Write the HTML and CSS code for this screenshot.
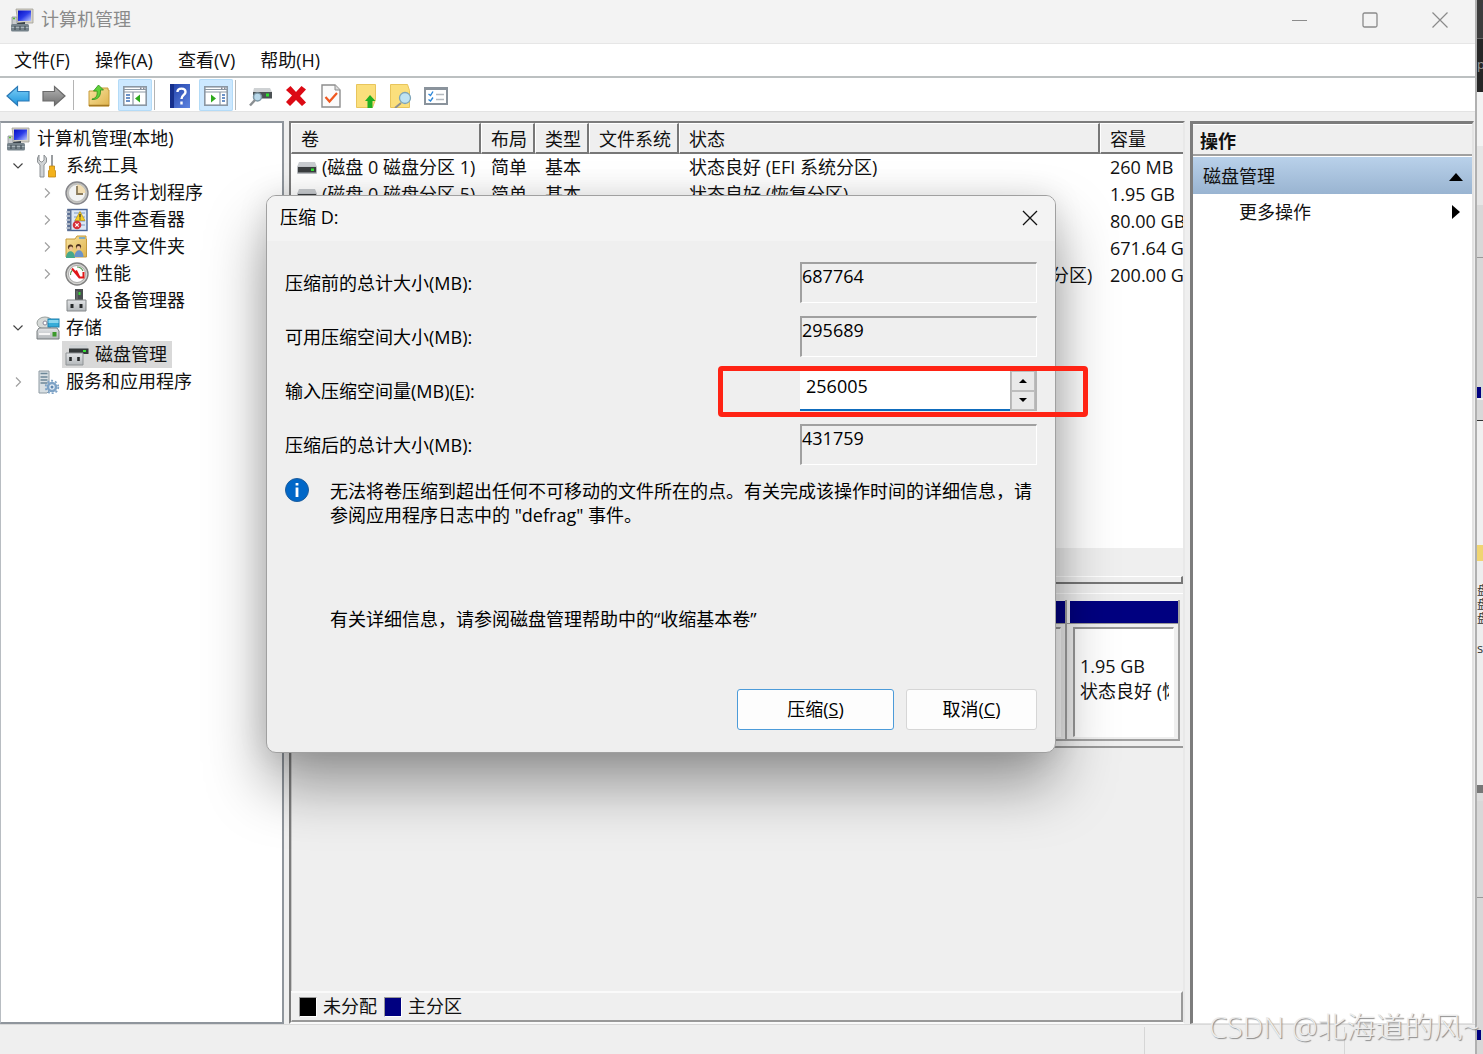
FILE: index.html
```html
<!DOCTYPE html>
<html lang="zh-CN">
<head>
<meta charset="utf-8">
<title>计算机管理</title>
<link rel="stylesheet" href="styles.css">
</head>
<body>
<svg class="sprite" aria-hidden="true">
  <defs>
    <linearGradient id="g-screen" x1="0" y1="0" x2="1" y2="1"><stop offset="0" stop-color="#0610c0"/><stop offset=".5" stop-color="#2b3ce8"/><stop offset="1" stop-color="#b9c6ff"/></linearGradient>
    <linearGradient id="g-blue" x1="0" y1="0" x2="0" y2="1"><stop offset="0" stop-color="#7fd0f7"/><stop offset="1" stop-color="#1b93dc"/></linearGradient>
    <linearGradient id="g-gray" x1="0" y1="0" x2="0" y2="1"><stop offset="0" stop-color="#b5b5b5"/><stop offset="1" stop-color="#6f6f6f"/></linearGradient>
    <linearGradient id="g-folder" x1="0" y1="0" x2="1" y2="1"><stop offset="0" stop-color="#f8e3a0"/><stop offset="1" stop-color="#dfb44e"/></linearGradient>
    <linearGradient id="g-help" x1="0" y1="0" x2="1" y2="1"><stop offset="0" stop-color="#1f3fa8"/><stop offset="1" stop-color="#5d84e0"/></linearGradient>
    <linearGradient id="g-metal" x1="0" y1="0" x2="0" y2="1"><stop offset="0" stop-color="#e2e4e6"/><stop offset="1" stop-color="#b4b8bb"/></linearGradient>
  </defs>
  <symbol id="i-computer" viewBox="0 0 24 24">
    <path d="M2 9h5v9H2z" fill="#c9cccf" stroke="#8b9094" stroke-width=".8"/><path d="M3 10.500h2" stroke="#59c02f" stroke-width="1.500"/>
    <path d="M6 1h17v14H8z" fill="#d6d3c8" stroke="#a19e94" stroke-width=".8"/>
    <path d="M8 2.500h13v10.500H8z" fill="url(#g-screen)"/>
    <path d="M7 15l8-1v2l-7 2z" fill="#38424a"/>
    <rect x="1" y="16" width="18" height="7.500" rx="1.500" fill="#75828a"/><path d="M1.500 19.500h17" stroke="#a9b4ba"/><path d="M5 18v4M10 18v4M15 18v4" stroke="#4a565e" stroke-width="1.300"/>
  </symbol>
  <symbol id="i-drive" viewBox="0 0 22 12">
    <path d="M3 0h16l2 5H1z" fill="#c9ccd0"/><rect x="1" y="4.500" width="20" height="7.500" rx="1" fill="#b9bcc0"/><rect x="2" y="5" width="18" height="5.500" fill="#3b3e40"/><rect x="15" y="6.500" width="3" height="2.500" fill="#35e035"/>
  </symbol>
  <symbol id="i-panes" viewBox="0 0 24 20">
    <rect x=".8" y=".8" width="22.400" height="18.400" fill="#fff" stroke="#8b97a3" stroke-width="1.600"/><path d="M1 3.500h22M1 6h22" stroke="#8b97a3" stroke-width="1.200"/><path d="M17 2.200h1.500M20 2.200h1.500" stroke="#556"/>
  </symbol>
</svg>

<div class="desktop">
  <main class="app">
    <header class="titlebar">
      <svg class="ico24"><use href="#i-computer"/></svg>
      <h1 class="titlebar-text">计算机管理</h1>
      <div class="caption">
        <button class="cap-btn" aria-label="最小化"><svg width="16" height="16"><path d="M0 8.500h15" stroke="#8c8c8c"/></svg></button>
        <button class="cap-btn" aria-label="最大化"><svg width="16" height="16"><rect x="1" y="1" width="14" height="14" rx="1.500" fill="none" stroke="#8a8a8a" stroke-width="1.300"/></svg></button>
        <button class="cap-btn" aria-label="关闭"><svg width="16" height="16"><path d="M.5.500l15 15M15.500.500l-15 15" stroke="#8a8a8a" stroke-width="1.200"/></svg></button>
      </div>
    </header>
    <nav class="menubar">
      <button>文件(F)</button><button>操作(A)</button><button>查看(V)</button><button>帮助(H)</button>
    </nav>
    <div class="toolbar">
      <button class="tool" aria-label="后退"><svg width="24" height="22"><path d="M1 11L11.500 1.500V6.500H23V16H11.500V20.500Z" fill="url(#g-blue)" stroke="#2a78b5" stroke-width="1.200"/></svg></button>
      <button class="tool" aria-label="前进"><svg width="24" height="22"><path d="M23 11L12.500 1.500V6.500H1V16H12.500V20.500Z" fill="url(#g-gray)" stroke="#6a6a6a" stroke-width="1.200"/></svg></button>
      <span class="sep"></span>
      <button class="tool" aria-label="上一级"><svg width="24" height="24"><path d="M2 7h7l2-3h10v2h1v16H2z" fill="url(#g-folder)" stroke="#c89c3c"/><path d="M2 21.500h20" stroke="#a57920" stroke-width="1.500"/><path d="M5 15C10 14 10.500 11 10 7H6.500L11.500 1l5 5H13.500C14 12 11 16 5 15.500Z" fill="#5fd13a" stroke="#2f8f1a" stroke-width=".8"/></svg></button>
      <button class="tool active" aria-label="显示控制台树"><svg width="24" height="20"><use href="#i-panes"/><path d="M10 6v13" stroke="#8b97a3" stroke-width="1.200"/><path d="M3 9h4M3 12h4M3 15h4" stroke="#3d6fb5" stroke-width="1.500"/><path d="M17 8.500v8l-5-4z" fill="#2faa1c"/></svg></button>
      <span class="sep"></span>
      <button class="tool" aria-label="帮助"><svg width="20" height="24"><rect width="20" height="24" fill="url(#g-help)"/><rect width="4" height="24" fill="#16308c"/><path d="M7.500 8C7.500 3.500 15.500 3.500 15.500 8C15.500 11 11.500 11 11.500 15M11.500 17.500v3" stroke="#fff" stroke-width="2.400" fill="none"/></svg></button>
      <button class="tool active" aria-label="显示操作窗格"><svg width="24" height="20"><use href="#i-panes"/><path d="M16 6v13" stroke="#8b97a3" stroke-width="1.200"/><path d="M18 9h3M18 12h3M18 15h3" stroke="#3d6fb5" stroke-width="1.500"/><path d="M7 8.500v8l5-4z" fill="#2faa1c"/></svg></button>
      <span class="sep"></span>
      <button class="tool slim" aria-label="重新扫描"><svg width="24" height="22"><path d="M5 3h16l2 4H4z" fill="#cfd2d4"/><rect x="4" y="7" width="19" height="6.500" fill="#4b5154"/><rect x="17" y="8.500" width="3" height="3" fill="#2ee02e"/><circle cx="8.500" cy="12" r="4" fill="#b8d8ea" stroke="#7d97a5" stroke-width="1.500"/><path d="M6 15l-5 5.500" stroke="#8a8f92" stroke-width="2.500"/></svg></button>
      <button class="tool slim" aria-label="删除"><svg width="22" height="22"><path d="M1 5L5.500 1 11 7 16.500 1 21 4.500 15 11l6 6.500L17 21l-6-6-6 6-4-4 6-6.500Z" fill="#dc0a14"/></svg></button>
      <button class="tool slim" aria-label="属性"><svg width="20" height="24"><path d="M1 1h13l5 5v17H1z" fill="#fbfbfb" stroke="#8d8d8d" stroke-width="1.400"/><path d="M14 1v5h5" fill="#ddd" stroke="#8d8d8d"/><path d="M4.500 13l4 4.500L16 9" fill="none" stroke="#f0571f" stroke-width="2.200"/></svg></button>
      <button class="tool slim" aria-label="打开"><svg width="20" height="24"><path d="M.5.500h19v15l-3 8H.5z" fill="#fbdf7c" stroke="#e8c55c"/><path d="M14 11l5.500 6H16.500v7h-5v-7H9z" fill="#22b022"/></svg></button>
      <button class="tool slim" aria-label="浏览"><svg width="22" height="24"><path d="M.5.500h17l2 6v17H.5z" fill="#fbdf7c" stroke="#e8c55c"/><path d="M11 19l-6 5" stroke="#8c8f92" stroke-width="2"/><circle cx="15" cy="14" r="5.500" fill="#bfe3f3" stroke="#7fa5b8" stroke-width="1.300"/></svg></button>
      <button class="tool slim" aria-label="列表"><svg width="24" height="18"><rect x="1" y="1" width="22" height="16" fill="#fff" stroke="#8a939c" stroke-width="2"/><path d="M1 2h22" stroke="#8a939c" stroke-width="2"/><path d="M4.500 7l2 1.500L9 4.500M4.500 12.500l2 1.500L9 10.500" fill="none" stroke="#2b86d8" stroke-width="1.400"/><path d="M12 7.500h8M12 12.500h8" stroke="#b5bac0" stroke-width="1.400"/></svg></button>
    </div>

    <div class="panes">
      <aside class="tree">
        <ul>
          <li class="node l0"><svg class="ico24"><use href="#i-computer"/></svg><span>计算机管理(本地)</span></li>
          <li class="node l1"><svg class="chev" viewBox="0 0 10 10"><path d="M.5 2.500L5 7l4.500-4.500" stroke="#444"/></svg>
            <svg class="ico24" viewBox="0 0 24 24"><path d="M3 1v5l2 2h1l2-2V1l2.500 3v4L8 11v12H4V11L1.500 8V4z" fill="#d0d3d5" stroke="#85898c" stroke-width=".9"/><path d="M16 1v11" stroke="#9a9da0" stroke-width="2"/><path d="M13.500 12h5v3.500l1 1.500v6h-7v-6l1-1.500z" fill="#f3b21c" stroke="#bf8510" stroke-width=".8"/></svg><span>系统工具</span></li>
          <li class="node l2"><svg class="chev side" viewBox="0 0 10 10"><path d="M3 .5L7.500 5 3 9.500" stroke="#a0a0a0"/></svg>
            <svg class="ico24" viewBox="0 0 24 24"><circle cx="12" cy="12" r="11" fill="#c4c4c0" stroke="#85858a" stroke-width="1.400"/><circle cx="12" cy="12" r="8.500" fill="#f2f3f3" stroke="#aaa" stroke-width=".6"/><path d="M12 12V3.500A8.500 8.500 0 0 1 20.500 12z" fill="#f1ddb2"/><path d="M12 5v8h6" fill="none" stroke="#8a7a5a" stroke-width="1.800"/></svg><span>任务计划程序</span></li>
          <li class="node l2"><svg class="chev side" viewBox="0 0 10 10"><path d="M3 .5L7.500 5 3 9.500" stroke="#a0a0a0"/></svg>
            <svg class="ico24" viewBox="0 0 24 24"><rect x="3" y="1.500" width="19" height="21" fill="#dce7f4" stroke="#4b6797" stroke-width="1.400"/><rect x="2.500" y="1" width="4" height="22" fill="#5b6f92"/><path d="M1 4h4M1 8h4M1 12h4M1 16h4M1 20h4" stroke="#c5ccd6" stroke-width="1.400"/><path d="M9 5h11M9 9h11M9 13h11M9 17h11" stroke="#7f9cc6"/><path d="M15 3.500l5 9H10z" fill="#f7cf24" stroke="#bb9410" stroke-width=".7"/><path d="M15 6v3.500M15 10.500v1" stroke="#333" stroke-width="1.300"/><circle cx="12" cy="17" r="4.300" fill="#d63038"/><path d="M10.300 15.300l3.400 3.400M13.700 15.300l-3.400 3.400" stroke="#fff" stroke-width="1.200"/></svg><span>事件查看器</span></li>
          <li class="node l2"><svg class="chev side" viewBox="0 0 10 10"><path d="M3 .5L7.500 5 3 9.500" stroke="#a0a0a0"/></svg>
            <svg class="ico24" viewBox="0 0 24 24"><path d="M1 4h9l2-3h9v3h.5v18H1z" fill="url(#g-folder)" stroke="#c79b3b"/><path d="M14 3h6" stroke="#5aa0dc" stroke-width="1.500"/><circle cx="5.500" cy="12" r="2.600" fill="#5a3a20"/><circle cx="6" cy="13.500" r="2" fill="#f0c59a"/><path d="M1 23c0-9 9-9 9 0z" fill="#45a88a"/><circle cx="13.500" cy="11.500" r="2.600" fill="#4c3220"/><circle cx="13.500" cy="13" r="2" fill="#f0c59a"/><path d="M9.500 22c0-9 9-9 9 0z" fill="#6a93ca"/></svg><span>共享文件夹</span></li>
          <li class="node l2"><svg class="chev side" viewBox="0 0 10 10"><path d="M3 .5L7.500 5 3 9.500" stroke="#a0a0a0"/></svg>
            <svg class="ico24" viewBox="0 0 24 24"><circle cx="12" cy="12" r="11" fill="#d3d3d0" stroke="#818181" stroke-width="1.400"/><circle cx="12" cy="12" r="8.500" fill="#fff" stroke="#999" stroke-width=".8"/><path d="M5.500 13a6.500 6.500 0 0 1 2-5M12 5a6.500 6.500 0 0 1 6 4" fill="none" stroke="#5a9a58" stroke-width="1.200"/><path d="M7 6.500l7.500 9M11 8.500l3.500 7h4V10" fill="none" stroke="#e01818" stroke-width="2"/></svg><span>性能</span></li>
          <li class="node l2"><span class="chev"></span>
            <svg class="ico24" viewBox="0 0 24 24"><path d="M10 0h8v12h-8z" fill="#4a4e50"/><path d="M12 2v8" stroke="#6b6f70" stroke-width="1.500"/><rect x="13.500" y="3" width="2" height="3" fill="#3ad43a"/><path d="M2 11h19v11H2z" fill="url(#g-metal)" stroke="#84888a"/><path d="M7 15v4M16 15v4" stroke="#26292a" stroke-width="3"/></svg><span>设备管理器</span></li>
          <li class="node l1"><svg class="chev" viewBox="0 0 10 10"><path d="M.5 2.500L5 7l4.500-4.500" stroke="#444"/></svg>
            <svg class="ico24" viewBox="0 0 24 24"><ellipse cx="9" cy="7" rx="8" ry="6" fill="#d6dad8" stroke="#9aa09e"/><circle cx="9" cy="7" r="2" fill="#fff" stroke="#889"/><rect x="12" y="3" width="11" height="8" fill="#35acd8" stroke="#1c7fae"/><path d="M12.500 4h10v3h-10z" fill="#8ad6ee"/><path d="M3 12h18l2 3v8H1v-8z" fill="url(#g-metal)" stroke="#777c7f"/><rect x="16.500" y="16" width="4" height="4.500" fill="#3c9a2c"/><path d="M3 18h11" stroke="#f6f6f6" stroke-width="2"/></svg><span>存储</span></li>
          <li class="node l2 selected"><span class="chev"></span>
            <span class="pick"><svg class="ico24" viewBox="0 0 24 24"><path d="M5 2h17l1 4H4z" fill="#cfd2d4"/><rect x="4" y="5.500" width="19.500" height="5.500" fill="#35393a"/><rect x="18" y="7" width="3" height="2" fill="#35e035"/><path d="M1 10h17v12H1z" fill="url(#g-metal)" stroke="#8f9395"/><path d="M5.500 14v4M13.500 14v4" stroke="#26292a" stroke-width="2.600"/></svg><span>磁盘管理</span></span></li>
          <li class="node l1"><svg class="chev side" viewBox="0 0 10 10"><path d="M3 .5L7.500 5 3 9.500" stroke="#a0a0a0"/></svg>
            <svg class="ico24" viewBox="0 0 24 24"><path d="M3 1h10v20l-2 2H3z" fill="#d8dfe3" stroke="#8e9aa2"/><path d="M4.500 3.500h7M4.500 7h7M4.500 10h7M4.500 13h7" stroke="#6c8798" stroke-width="1.400"/><circle cx="16" cy="17" r="4" fill="#e6eff7" stroke="#7ca2c6" stroke-width="2.600"/><circle cx="16" cy="17" r="6.300" fill="none" stroke="#7ca2c6" stroke-width="1.800" stroke-dasharray="2 2"/><circle cx="16" cy="17" r="1.500" fill="#5e87b0"/></svg><span>服务和应用程序</span></li>
        </ul>
      </aside>

      <section class="center">
        <div class="volumes">
          <table>
            <colgroup><col class="c-vol"><col class="c-s"><col class="c-s"><col class="c-fs"><col class="c-st"><col class="c-cap"></colgroup>
            <thead><tr><th>卷</th><th>布局</th><th>类型</th><th>文件系统</th><th>状态</th><th>容量</th></tr></thead>
            <tbody>
              <tr><td><svg class="drive"><use href="#i-drive"/></svg>(磁盘 0 磁盘分区 1)</td><td>简单</td><td>基本</td><td></td><td>状态良好 (EFI 系统分区)</td><td>260 MB</td></tr>
              <tr><td><svg class="drive"><use href="#i-drive"/></svg>(磁盘 0 磁盘分区 5)</td><td>简单</td><td>基本</td><td></td><td>状态良好 (恢复分区)</td><td>1.95 GB</td></tr>
              <tr><td></td><td></td><td></td><td></td><td></td><td>80.00 GB</td></tr>
              <tr><td></td><td></td><td></td><td></td><td></td><td>671.64 GB</td></tr>
              <tr><td></td><td></td><td></td><td></td><td>状态良好 (启动, 页面文件, 故障转储, 基本数据分区)</td><td>200.00 GB</td></tr>
            </tbody>
          </table>
        </div>
        <div class="hscroll"></div>
        <div class="splitter"></div>
        <div class="disks">
          <div class="part wide"><div class="bar"></div><div class="part-body"><div class="part-in"></div></div></div>
          <div class="part"><div class="bar"></div><div class="part-body"><div class="part-in"><p>1.95 GB</p><p>状态良好 (恢复分区)</p></div></div></div>
        </div>
        <div class="blank"></div>
        <footer class="legend"><i class="sw black"></i><span>未分配</span><i class="sw navy"></i><span>主分区</span></footer>
      </section>

      <aside class="actions">
        <h2 class="actions-head">操作</h2>
        <div class="actions-group"><span>磁盘管理</span><svg width="14" height="8"><path d="M7 0l7 8H0z"/></svg></div>
        <button class="actions-item"><span>更多操作</span><svg width="8" height="14"><path d="M0 0l8 7-8 7z"/></svg></button>
      </aside>
    </div>
    <footer class="status"><span></span><span></span><span></span></footer>
  </main>

  <aside class="behind" aria-hidden="true">
    <div class="b1">刂</div><div class="b2">p</div><div class="b3"></div><div class="b4"></div><div class="b5"></div><div class="b6"></div><div class="b7"></div><div class="b8"></div><div class="b9"></div><div class="b10"></div><div class="b11">盘盘盘</div><div class="b12">s-</div><div class="b13"></div><div class="b14"></div><div class="b15"></div><div class="b16"></div>
  </aside>

  <form class="dialog" role="dialog" aria-label="压缩 D:">
    <header class="dlg-title"><span>压缩 D:</span><button type="button" class="dlg-close" aria-label="关闭"><svg width="16" height="16"><path d="M1 1l14 14M15 1L1 15" stroke="#111" stroke-width="1.300"/></svg></button></header>
    <div class="dlg-body">
      <div class="field"><label for="f1">压缩前的总计大小(MB):</label><input id="f1" class="sunk" value="687764" readonly></div>
      <div class="field"><label for="f2">可用压缩空间大小(MB):</label><input id="f2" class="sunk" value="295689" readonly></div>
      <div class="field"><label for="f3">输入压缩空间量(MB)(<u>E</u>):</label>
        <div class="spin"><input id="f3" value="256005" inputmode="numeric">
          <div class="spin-btns"><button type="button" aria-label="增加"><svg width="8" height="4"><path d="M4 0l4 4H0z"/></svg></button><button type="button" aria-label="减少"><svg width="8" height="4"><path d="M0 0h8L4 4z"/></svg></button></div>
        </div>
        <div class="marker"></div>
      </div>
      <div class="field"><label for="f4">压缩后的总计大小(MB):</label><input id="f4" class="sunk" value="431759" readonly></div>
      <div class="info">
        <svg width="24" height="24"><circle cx="12" cy="12" r="11.500" fill="#0067c8" stroke="#1c5c9c"/><path d="M12 9.500V19M12 5v2.600" stroke="#fff" stroke-width="2.800"/></svg>
        <p>无法将卷压缩到超出任何不可移动的文件所在的点。有关完成该操作时间的详细信息，请参阅应用程序日志中的 "defrag" 事件。</p>
      </div>
      <p class="more">有关详细信息，请参阅磁盘管理帮助中的“收缩基本卷”</p>
      <div class="dlg-btns"><button type="button" class="primary">压缩(<u>S</u>)</button><button type="button" class="cancel">取消(<u>C</u>)</button></div>
    </div>
  </form>
  <div class="watermark">CSDN @北海道的风~</div>
</div>
</body>
</html>
```
FILE: styles.css
```css
* { box-sizing: border-box; }
body {
  margin: 0;
  font: 18px/27px "Open Sans", "Noto Sans CJK SC", sans-serif;
  color: #111;
  background: #efefef;
}
button, input { font: inherit; color: inherit; }
button { border: 0; padding: 0; background: none; }
ul, p, h1, h2 { margin: 0; padding: 0; font: inherit; list-style: none; }
svg { display: block; flex: none; }
path:not([fill]):not([stroke]) { fill: #000; }
.sprite { position: absolute; width: 0; height: 0; }

.desktop { position: relative; display: flex; height: 100vh; overflow: hidden; }
.app { flex: 1; min-width: 0; display: flex; flex-direction: column; background: #efefef; }
.ico24 { width: 24px; height: 24px; }

/* title bar, menu, toolbar */
.titlebar { display: flex; align-items: center; height: 44px; padding: 0 0 4px 10px; gap: 7px; background: #f3f3f3; border-bottom: 1px solid #e6e6e6; }
.titlebar-text { color: #8a8a8a; }
.caption { margin-left: auto; display: flex; }
.cap-btn { width: 70px; height: 39px; display: grid; place-items: center; }
.menubar { display: flex; gap: 25px; height: 34px; padding: 0 14px; background: #fff; border-bottom: 2px solid #bcc0c1; }
.toolbar { display: flex; align-items: center; gap: 2px; height: 34px; padding-left: 1px; background: #fff; border-bottom: 1px solid #e3e3e3; }
.tool { width: 34px; height: 32px; display: grid; place-items: center; padding-top: 2px; }
.slim { width: 33px; }
.active { background: #cce8ff; box-shadow: inset 0 0 0 1px #b4dbf7; border-radius: 2px; }
.sep { width: 1px; height: 30px; margin-right: 6px; background: #b4b4b4; }

/* three panes */
.panes { flex: 1; min-height: 0; display: flex; padding: 9px 1px 0 0; }
.tree { width: 284px; border: 2px solid #8f959c; border-left: 1px solid #b8bdc2; padding-top: 2px; background: #fff; }
.node { display: flex; align-items: center; height: 27px; gap: 6px; }
.l0 { padding-left: 5px; gap: 7px; }
.l1 { padding-left: 12px; }
.l2 { padding-left: 41px; }
.l1 > .chev, .l2 > .chev { margin-right: 7px; }
.chev { width: 10px; height: 10px; fill: none; stroke-width: 1.2; flex: none; }
.node span { white-space: nowrap; }
.pick { display: flex; align-items: center; gap: 6px; height: 27px; margin-left: -3px; padding: 0 5px 0 3px; background: #d9d9d9; }

.center { flex: 1; min-width: 0; margin-left: 5px; display: flex; flex-direction: column; border: 2px solid; border-color: #7c7c7c #e8e8e8 #fafafa #7c7c7c; box-shadow: inset 1px 0 0 #c8c8c8; }
.volumes { height: 425px; overflow: hidden; background: #fff; }
table { width: 100%; table-layout: fixed; border-collapse: separate; border-spacing: 0; }
.c-vol { width: 190px; }
.c-s { width: 54px; }
.c-fs { width: 90px; }
.c-st { width: 421px; }
th { height: 31px; padding: 1px 0 0 9px; text-align: left; font-weight: 400; line-height: 26px; background: #efefef; border: 1px solid; border-width: 1px 2px 2px 1px; border-color: #fff #777 #777 #fff; white-space: nowrap; overflow: hidden; }
th:last-child { border-right: 0; }
td { height: 27px; padding: 0 0 0 10px; white-space: nowrap; overflow: hidden; line-height: 27px; }
td:first-child { padding-left: 5px; }
.drive { display: inline-block; width: 22px; height: 12px; margin-right: 4px; vertical-align: 0; }
.hscroll { height: 28px; background: #efefef; }
.splitter { height: 8px; background: #efefef; border: solid; border-width: 1px 2px 2px 0; border-color: #fff #777 #777; }
.disks { display: flex; margin-top: 9px; height: 155px; padding: 6px 3px 5px 0; border-top: 1px solid #fff; border-bottom: 2px solid #999; }
.part { width: 113px; display: flex; flex-direction: column; border: solid; border-width: 0 2px 2px 0; border-color: #a0a0a0; }
.wide { flex: 1; }
.bar { height: 22px; margin: 1px 0 0 3px; background: #000080; }
.part-body { flex: 1; min-height: 0; display: flex; padding: 3px 4px 2px 6px; border-top: 1px solid #999; }
.part-in { flex: 1; min-width: 0; padding: 25px 4px 0 5px; border: 1px solid; border-width: 2px 1px 1px 2px; border-color: #999 #fff #fff #999; background: #fff; overflow: hidden; }
.part-in p { line-height: 25px; white-space: nowrap; overflow: hidden; }
.blank { flex: 1; }
.legend { display: flex; align-items: center; height: 31px; padding: 0 0 0 7px; border: solid; border-width: 2px 2px 2px 1px; border-color: #fafafa #999 #999 #efefef; }
.sw { width: 18px; height: 20px; margin-right: 6px; border: 1px solid; border-color: #999 #fff #fff #999; }
.sw:not(:first-child) { margin-left: 7px; }
.black { background: #000; }
.navy { background: #000080; }

.actions { width: 284px; margin-left: 5px; border: solid; border-width: 3px 2px 1px 3px; border-color: #7c7c7c #e3e3e3 #e3e3e3 #7c7c7c; background: #fff; }
.actions-head { height: 32px; padding: 3px 7px 0; font-weight: 700; background: #efefef; border-top: 1px solid #fff; border-bottom: 2px solid #a0a0a0; line-height: 26px; }
.actions-group { display: flex; align-items: center; justify-content: space-between; height: 37px; margin-top: 1px; padding: 2px 9px 0 10px; background: linear-gradient(#b9d1ea, #99b4d1); }
.actions-item { display: flex; align-items: center; justify-content: space-between; width: 100%; height: 36px; padding: 0 12px 0 46px; }
.status { display: flex; height: 30px; border-top: 1px solid #d9d9d9; }
.status span { width: 200px; border-right: 1px solid #d6d6d6; margin-top: 2px; }
.status span:first-child { flex: 1; }
.status span:last-child { width: 130px; border: 0; }

/* sliver of the window lying behind */
.behind { width: 8px; display: flex; flex-direction: column; overflow: hidden; border-left: 2px solid #b0b0b0; background: #d8d8d8; font-size: 13px; line-height: 14px; color: #333; }
.behind div { flex: none; overflow: hidden; }
.b1 { height: 38px; background: #3c3c3c; color: #ccc; }
.b2 { height: 54px; padding-top: 18px; background: #262626; color: #999; border-top: 1px solid #666; }
.b3 { height: 54px; background: #f3f3f3; }
.b4 { height: 59px; background: #e6e6e6; }
.b5 { height: 53px; border-bottom: 1px solid #999; }
.b6 { height: 129px; }
.b7 { height: 11px; width: 4px; background: #000080; }
.b8 { height: 23px; border-bottom: 1px solid #333; border-top: 2px solid #eee; }
.b9 { height: 124px; background: #f0f0f0; }
.b10 { height: 16px; background: #f0d572; }
.b11 { height: 80px; padding-top: 23px; background: #eee; font-size: 12px; }
.b12 { height: 144px; background: #eee; }
.b13 { height: 8px; background: #777; }
.b14 { height: 105px; border-top: 8px solid #ddd; border-bottom: 1px solid #999; }
.b15 { height: 132px; }
.b16 { height: 10px; width: 4px; background: #000080; }

/* shrink dialog */
.dialog { position: absolute; left: 266px; top: 195px; width: 790px; border: 1px solid #a0a0a0; border-radius: 10px; background: #efefef; box-shadow: 0 32px 60px rgba(0, 0, 0, .38), 0 0 30px rgba(0, 0, 0, .1); color: #000; }
.dlg-title { display: flex; align-items: center; justify-content: space-between; height: 45px; padding: 0 17px 2px 13px; background: #f3f3f3; border-radius: 9px 9px 0 0; }
.dlg-body { padding: 21px 18px 22px; }
.field { position: relative; display: flex; justify-content: space-between; align-items: center; height: 41px; margin-bottom: 13px; }
.field label { padding-top: 2px; }
.sunk { width: 237px; height: 41px; padding: 0 0 15px; border: solid; border-width: 2px 1px 1px 2px; border-color: #a0a0a0 #fff #fff #a0a0a0; background: #efefef; outline: 0; }
.spin { display: flex; width: 237px; height: 41px; }
.spin input { flex: 1; min-width: 0; padding: 0 6px 6px; border: 0; border-bottom: 2px solid #0f6cbd; background: #fff; outline: 0; }
.spin-btns { width: 27px; display: flex; flex-direction: column; border: 1px solid #b5b5b5; border-right-width: 2px; }
.spin-btns button { flex: 1; display: grid; place-items: center; border: 1px solid #bdbdbd; background: #e9e9e9; }
.marker { position: absolute; right: -51px; top: -4px; width: 370px; height: 51px; border: 5px solid #ff2314; border-radius: 4px; pointer-events: none; }
.info { display: flex; gap: 21px; line-height: 24px; }
.info p { width: 706px; padding-top: 1px; }
.more { margin-top: 79px; padding-left: 45px; }
.dlg-btns { display: flex; justify-content: flex-end; gap: 12px; margin-top: 56px; }
.dlg-btns button { height: 41px; border-radius: 3px; background: #fdfdfd; border: 1px solid #d6d6d6; }
.dlg-btns .primary { width: 157px; border-color: #4c9bd9; }
.dlg-btns .cancel { width: 131px; }

.watermark { position: absolute; right: 4px; bottom: 9px; font: 300 29px/36px "Open Sans", "Noto Sans CJK SC", sans-serif; color: #ececec; text-shadow: 1px 1px 1px #888; white-space: nowrap; }
```
